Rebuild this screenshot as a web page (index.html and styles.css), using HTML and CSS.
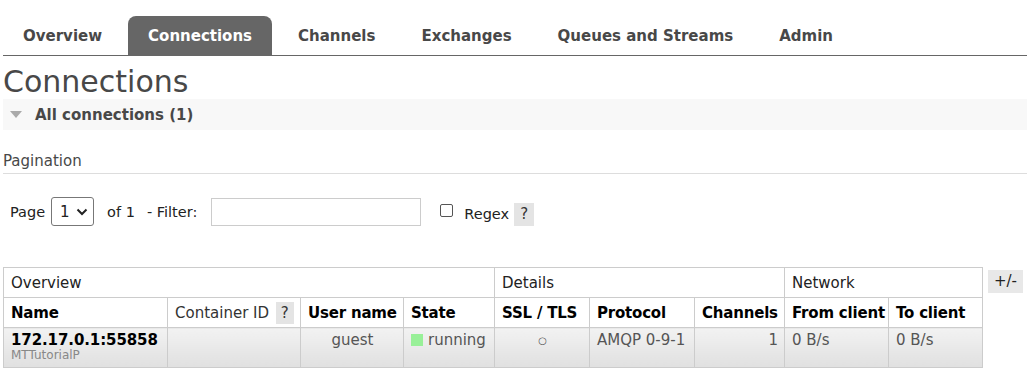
FILE: index.html
```html
<!DOCTYPE html>
<html>
<head>
<meta charset="utf-8">
<link rel="stylesheet" href="styles.css">
</head>
<body>
<div class="page">
  <ul class="tabs">
    <li class="tab">Overview</li>
    <li class="tab active">Connections</li>
    <li class="tab">Channels</li>
    <li class="tab">Exchanges</li>
    <li class="tab">Queues and Streams</li>
    <li class="tab">Admin</li>
  </ul>
  <h1 class="title">Connections</h1>
  <div class="section-bar">
    <svg class="tri" width="12" height="8" viewBox="0 0 12 8"><polygon points="0,0 12,0 6,7" fill="#aaa"/></svg>
    <span>All connections (1)</span>
  </div>
  <div class="pagination-title">Pagination</div>
  <div class="pager">
    <span class="lbl">Page</span>
    <span class="select"><span>1</span><svg width="12" height="8" viewBox="0 0 12 8"><polyline points="1.5,1.5 6,6 10.5,1.5" fill="none" stroke="#222" stroke-width="2"/></svg></span>
    <span class="lbl of">of 1</span>
    <span class="lbl filter">- Filter:</span>
    <span class="input"></span>
    <span class="checkbox"></span>
    <span class="lbl regex">Regex</span>
    <span class="help">?</span>
  </div>
  <div class="table-wrap">
    <table class="list">
      <colgroup>
        <col class="c-name"><col class="c-cid"><col class="c-user"><col class="c-state"><col class="c-ssl"><col class="c-proto"><col class="c-ch"><col class="c-from"><col class="c-to">
      </colgroup>
      <thead>
        <tr class="groups">
          <th colspan="4">Overview</th>
          <th colspan="3">Details</th>
          <th colspan="2">Network</th>
        </tr>
        <tr class="heads">
          <th>Name</th>
          <th class="plain">Container ID <span class="help small">?</span></th>
          <th>User name</th>
          <th>State</th>
          <th>SSL / TLS</th>
          <th>Protocol</th>
          <th>Channels</th>
          <th>From client</th>
          <th>To client</th>
        </tr>
      </thead>
      <tbody>
        <tr class="row">
          <td class="name"><div class="addr">172.17.0.1:55858</div><div class="sub">MTTutorialP</div></td>
          <td></td>
          <td class="center">guest</td>
          <td><span class="dot"></span>running</td>
          <td class="center ssl">○</td>
          <td>AMQP 0-9-1</td>
          <td class="right">1</td>
          <td>0 B/s</td>
          <td>0 B/s</td>
        </tr>
      </tbody>
    </table>
    <span class="toggle">+/-</span>
  </div>
</div>
</body>
</html>
```

FILE: styles.css
```css
html, body {
  margin: 0;
  padding: 0;
  background: #fff;
}
body {
  font-family: "DejaVu Sans", Verdana, sans-serif;
  color: #333;
}
.page {
  padding-left: 3px;
}
.tabs {
  list-style: none;
  margin: 0;
  padding: 16px 0 0 0;
  display: flex;
  border-bottom: 1px solid #666;
  height: 39px;
  box-sizing: content-box;
}
.tab {
  padding: 0 20px;
  margin-right: 6px;
  height: 39px;
  line-height: 41px;
  font-size: 15px;
  font-weight: bold;
  color: #484848;
  border-radius: 8px 8px 0 0;
}
.tab.active {
  background: #666;
  color: #fff;
}
.title {
  margin: 0;
  font-size: 30px;
  font-weight: normal;
  color: #484848;
  height: 43px;
  line-height: 52px;
}
.section-bar {
  background: #f8f8f8;
  height: 31px;
  display: flex;
  align-items: center;
  font-size: 15px;
  font-weight: bold;
  color: #484848;
}
.tri {
  margin: 1px 13px 0 7px;
}
.pagination-title {
  margin-top: 21px;
  font-size: 15px;
  color: #484848;
  height: 22px;
  line-height: 20px;
  border-bottom: 1px solid #ddd;
}
.pager {
  margin-top: 23px;
  display: flex;
  align-items: center;
  height: 29px;
  padding-left: 7px;
  font-size: 14.5px;
  color: #222;
}
.lbl.of { margin-left: 13px; }
.lbl.filter { margin-left: 12px; }
.select {
  margin-left: 6px;
  width: 43px;
  height: 29px;
  box-sizing: border-box;
  border: 1px solid #777;
  border-radius: 3px;
  display: flex;
  align-items: center;
  padding-left: 8px;
  gap: 6px;
  font-size: 15px;
}
.input {
  margin-left: 14px;
  width: 210px;
  height: 28px;
  box-sizing: border-box;
  border: 1px solid #ccc;
}
.checkbox {
  margin-left: 19px;
  width: 13px;
  height: 13px;
  box-sizing: border-box;
  border: 1px solid #555;
  border-radius: 2px;
  margin-top: -2px;
}
.lbl.regex {
  margin-left: 11px;
  margin-top: 5px;
}
.help {
  display: inline-block;
  background: #e4e4e4;
  color: #333;
  width: 20px;
  height: 23px;
  line-height: 23px;
  text-align: center;
  font-size: 15px;
  margin-left: 5px;
  margin-top: 5px;
}
.help.small {
  width: 18px;
  height: 22px;
  line-height: 22px;
  margin: 0 0 0 2px;
  vertical-align: middle;
}
.table-wrap {
  margin-top: 41px;
  display: flex;
  align-items: flex-start;
}
.list {
  border-collapse: collapse;
  table-layout: fixed;
  width: 979px;
  font-size: 15px;
}
.list th, .list td {
  border: 1px solid #ccc;
  padding: 0 6px 0 7px;
  text-align: left;
  white-space: nowrap;
  overflow: hidden;
}
.groups th {
  height: 29px;
  font-weight: normal;
  color: #222;
}
.heads th {
  height: 29px;
  font-weight: bold;
  color: #000;
  letter-spacing: -0.2px;
}
.heads th.plain {
  font-weight: normal;
  color: #333;
  letter-spacing: 0;
}
.c-name { width: 164px; }
.c-cid { width: 133px; }
.c-user { width: 103px; }
.c-state { width: 91px; }
.c-ssl { width: 95px; }
.c-proto { width: 105px; }
.c-ch { width: 90px; }
.c-from { width: 104px; }
.c-to { width: 94px; }
.row td {
  height: 36px;
  background: linear-gradient(#f2f2f2, #e0e0e0);
  vertical-align: top;
  padding-top: 3px;
  color: #555;
}
.addr {
  font-weight: bold;
  color: #000;
  font-size: 15px;
  line-height: 18px;
  letter-spacing: -0.1px;
}
.sub {
  font-size: 12px;
  color: #888;
  line-height: 13px;
}
.center { text-align: center !important; }
.right { text-align: right !important; }
.ssl { font-size: 10px; padding-top: 7px !important; height: 32px !important; }
.dot {
  display: inline-block;
  width: 12px;
  height: 12px;
  background: #98f098;
  margin-right: 5px;
  vertical-align: -1px;
}
.toggle {
  margin-left: 5px;
  margin-top: 3px;
  background: #e8e8e8;
  width: 35px;
  height: 23px;
  line-height: 23px;
  text-align: center;
  font-size: 15px;
  color: #222;
}
```
